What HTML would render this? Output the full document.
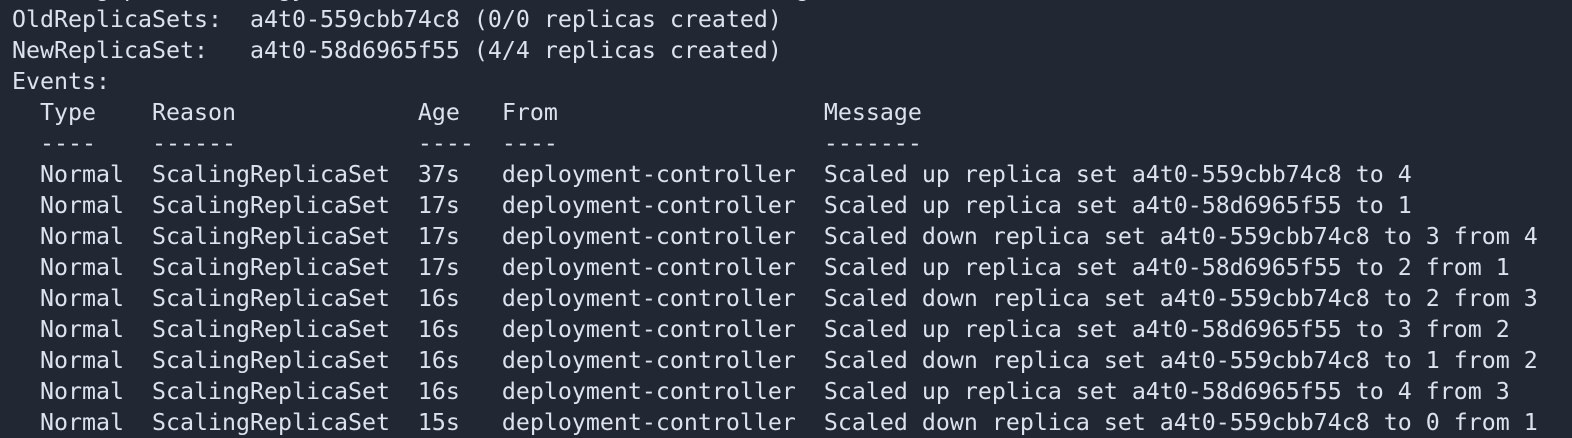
<!DOCTYPE html>
<html><head><meta charset="utf-8"><style>
html,body{margin:0;padding:0;background:#222734;width:1572px;height:434px;overflow:hidden}
pre{position:absolute;left:12px;top:-27px;margin:0;font-family:"DejaVu Sans Mono","Liberation Mono",monospace;font-size:23.25px;line-height:31px;color:#dde3ec;white-space:pre}
</style></head><body><pre>RollingUpdateStrategy:  25% max unavailable, 25% max surge
OldReplicaSets:  a4t0-559cbb74c8 (0/0 replicas created)
NewReplicaSet:   a4t0-58d6965f55 (4/4 replicas created)
Events:
  Type    Reason             Age   From                   Message
  ----    ------             ----  ----                   -------
  Normal  ScalingReplicaSet  37s   deployment-controller  Scaled up replica set a4t0-559cbb74c8 to 4
  Normal  ScalingReplicaSet  17s   deployment-controller  Scaled up replica set a4t0-58d6965f55 to 1
  Normal  ScalingReplicaSet  17s   deployment-controller  Scaled down replica set a4t0-559cbb74c8 to 3 from 4
  Normal  ScalingReplicaSet  17s   deployment-controller  Scaled up replica set a4t0-58d6965f55 to 2 from 1
  Normal  ScalingReplicaSet  16s   deployment-controller  Scaled down replica set a4t0-559cbb74c8 to 2 from 3
  Normal  ScalingReplicaSet  16s   deployment-controller  Scaled up replica set a4t0-58d6965f55 to 3 from 2
  Normal  ScalingReplicaSet  16s   deployment-controller  Scaled down replica set a4t0-559cbb74c8 to 1 from 2
  Normal  ScalingReplicaSet  16s   deployment-controller  Scaled up replica set a4t0-58d6965f55 to 4 from 3
  Normal  ScalingReplicaSet  15s   deployment-controller  Scaled down replica set a4t0-559cbb74c8 to 0 from 1
</pre></body></html>
